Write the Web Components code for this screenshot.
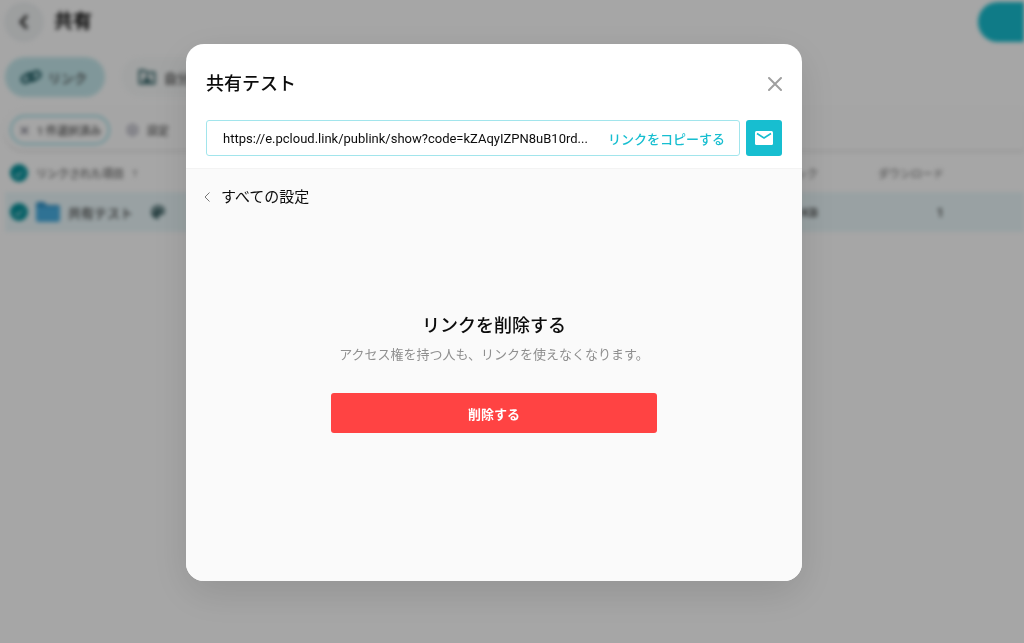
<!DOCTYPE html>
<html lang="ja">
<head>
<meta charset="utf-8">
<meta name="viewport" content="width=device-width, initial-scale=1">
<title>共有</title>
<style>
  :root {
    --accent: #17bed0;
    --accent-light: #a2e5ec;
    --danger: #ff4343;
    --text: #0c0c0c;
    --gray: #8f8f8f;
    --line: #f3f3f3;
  }

  body {
    margin: 0;
    min-height: 100vh;
    overflow: hidden;
    background: #fff;
    color: var(--text);
    font-family: Roboto, "Noto Sans CJK JP", sans-serif;
    font-size: 13px;
  }
</style>
</head>
<body>
<share-page inert>
  <page-header slot="header">共有</page-header>
  <tab-pill slot="tabs" icon="link" active>リンク</tab-pill>
  <tab-pill slot="tabs" icon="folder">自分</tab-pill>
  <selection-bar slot="toolbar">1 件選択済み</selection-bar>
  <links-table></links-table>
</share-page>

<modal-overlay>
  <share-modal>
    <span slot="title">共有テスト</span>
    <copy-link slot="link" url="https://e.pcloud.link/publink/show?code=kZAqyIZPN8uB10rd...">リンクをコピーする</copy-link>
    <delete-link>
      <span slot="heading">リンクを削除する</span>
      <span slot="text">アクセス権を持つ人も、リンクを使えなくなります。</span>
      <span slot="action">削除する</span>
    </delete-link>
  </share-modal>
</modal-overlay>

<script>
const BASE = `
  *, *::before, *::after {
    box-sizing: border-box;
  }

  button, input {
    font: inherit;
    color: inherit;
    margin: 0;
    padding: 0;
    border: none;
    background: none;
    outline: none;
  }

  button {
    cursor: pointer;
  }

  svg {
    display: block;
    flex: 0 0 auto;
  }
`;

const ICONS = {
  link: `
    <svg width="22" height="20" viewBox="0 0 22 20" fill="none" stroke="#1c5a60" stroke-width="2.500">
      <rect x="1.500" y="7.500" width="12" height="7" rx="3.500" transform="rotate(-30 7.500 11)"/>
      <rect x="8.500" y="5.500" width="12" height="7" rx="3.500" transform="rotate(-30 14.500 9)"/>
    </svg>`,
  folder: `
    <svg width="18" height="18" viewBox="0 0 18 18" fill="none" stroke="#2f6468" stroke-width="2">
      <path d="M1.5 2.5h5l2 2h8v11h-15z"/>
      <circle cx="9" cy="8" r="1.5" fill="#1f5358" stroke="none"/>
      <path d="M5 14c0-5 8-5 8 0z" fill="#1f5358" stroke="none"/>
    </svg>`
};

class SharePage extends HTMLElement {
  constructor() {
    super();

    this.attachShadow({ mode: 'open' });

    this.shadowRoot.innerHTML = `
      <style>
        ${BASE}

        :host {
          display: block;
          min-height: 100vh;
          filter: blur(2px);
        }

        .tabs {
          display: flex;
          gap: 16px;
          padding: 15px 5px 12px;
        }
      </style>

      <slot name="header"></slot>
      <nav class="tabs"><slot name="tabs"></slot></nav>
      <slot name="toolbar"></slot>
      <slot></slot>
    `;
  }
}

class PageHeader extends HTMLElement {
  constructor() {
    super();

    this.attachShadow({ mode: 'open' });

    this.shadowRoot.innerHTML = `
      <style>
        ${BASE}

        :host {
          display: flex;
          align-items: center;
          padding: 2px 0 0 4px;
        }

        .back {
          display: grid;
          place-items: center;
          width: 40px;
          height: 40px;
          border-radius: 50%;
          background: #f1f4f5;
        }

        h1 {
          flex: 1;
          margin: 0 0 0 10px;
          font-size: 19px;
          font-weight: 700;
          line-height: 40px;
        }

        .upload {
          width: 46px;
          height: 40px;
          border-radius: 20px 0 0 20px;
          background: var(--accent);
        }
      </style>

      <button class="back" aria-label="戻る">
        <svg width="12" height="16" viewBox="0 0 12 16" fill="none" stroke="#333" stroke-width="3"><path d="M9 1.500 3 8l6 6.500"/></svg>
      </button>
      <h1><slot></slot></h1>
      <button class="upload" aria-label="アップロード"></button>
    `;
  }
}

class TabPill extends HTMLElement {
  constructor() {
    super();

    this.attachShadow({ mode: 'open' });

    this.shadowRoot.innerHTML = `
      <style>
        ${BASE}

        :host {
          display: block;
        }

        button {
          display: flex;
          align-items: center;
          gap: 6px;
          min-width: 100px;
          height: 40px;
          padding: 0 15px;
          border-radius: 20px;
          background: #f9fbfb;
          color: #444;
          font-size: 13px;
          font-weight: 500;
        }

        .icon {
          display: grid;
          place-items: center;
          width: 22px;
        }

        :host([active]) button {
          background: #c5e9ed;
        }

        :host(:not([active])) button {
          min-width: 140px;
        }
      </style>

      <button>
        <span class="icon">${ICONS[this.getAttribute('icon')]}</span>
        <slot></slot>
      </button>
    `;
  }
}

class SelectionBar extends HTMLElement {
  constructor() {
    super();

    this.attachShadow({ mode: 'open' });

    this.shadowRoot.innerHTML = `
      <style>
        ${BASE}

        :host {
          display: flex;
          align-items: center;
          gap: 16px;
          height: 40px;
          margin-left: 4px;
          padding-left: 6px;
          border-top: 1px solid #f8f8f8;
          border-radius: 20px 0 0 20px;
          background: #fefefe;
          box-shadow: 0 2px 3px rgba(0, 0, 0, .1);
          color: #555;
          font-size: 11px;
          font-weight: 500;
        }

        button {
          display: flex;
          align-items: center;
          gap: 8px;
          height: 30px;
        }

        .selected {
          padding: 0 7px 0 8px;
          border: 2px solid #9de0e8;
          border-radius: 15px;
        }
      </style>

      <button class="selected">
        <svg width="9" height="9" viewBox="0 0 10 10" stroke="#667" stroke-width="1.500"><path d="M1 1l8 8M9 1L1 9"/></svg>
        <slot></slot>
      </button>
      <button>
        <svg width="13" height="14" viewBox="0 0 14 14" fill="none" stroke="#99a" stroke-width="1.500">
          <path d="M7 1l5.200 3v6L7 13l-5.200-3V4z"/>
          <circle cx="7" cy="7" r="2"/>
        </svg>
        設定
      </button>
    `;
  }
}

class LinksTable extends HTMLElement {
  constructor() {
    super();

    this.attachShadow({ mode: 'open' });

    this.shadowRoot.innerHTML = `
      <style>
        ${BASE}

        :host {
          display: block;
          padding: 0 0 0 5px;
        }

        table {
          width: 100%;
          border-collapse: collapse;
          table-layout: fixed;
        }

        th, td {
          height: 40px;
          padding: 0;
          text-align: right;
          white-space: nowrap;
        }

        th {
          height: 42px;
          padding-top: 4px;
          color: #888;
          font-size: 11px;
          font-weight: 500;
        }

        td {
          background: #ebf8fb;
          color: #444;
          font-size: 13px;
          font-weight: 500;
        }

        th.name {
          color: #666;
        }

        .traffic, .downloads {
          width: 126px;
        }

        .end {
          width: 80px;
        }

        .cell {
          display: flex;
          align-items: center;
          gap: 8px;
          padding-left: 5px;
        }

        input {
          appearance: none;
          display: grid;
          place-items: center;
          width: 18px;
          height: 18px;
          border-radius: 50%;
          background: #05929c;
        }

        input::after {
          content: '';
          width: 8px;
          height: 4px;
          border: solid #fff;
          border-width: 0 0 1px 1px;
          transform: rotate(-45deg);
        }

        .palette {
          margin-left: 10px;
        }
      </style>

      <table>
        <thead>
          <tr>
            <th class="name">
              <div class="cell">
                <input type="checkbox" aria-label="すべて選択" checked>
                リンクされた項目
                <svg width="6" height="8" viewBox="0 0 6 8" fill="none" stroke="#888"><path d="M3 8V1M1 3l2-2 2 2"/></svg>
              </div>
            </th>
            <th class="traffic">トラフィック</th>
            <th class="downloads">ダウンロード</th>
            <th class="end"></th>
          </tr>
        </thead>
        <tbody>
          <tr>
            <td>
              <div class="cell">
                <input type="checkbox" id="item" checked>
                <svg width="24" height="20" viewBox="0 0 24 20">
                  <path fill="#2f92c8" d="M0 2q0-2 2-2h6l3 3h11q2 0 2 2v5H0z"/>
                  <path fill="#49afe3" d="M0 6q0-1 1-1h22q1 0 1 1v12q0 2-2 2H2q-2 0-2-2z"/>
                </svg>
                <label for="item">共有テスト</label>
                <svg class="palette" width="14" height="14" viewBox="3 3 18 18"><path fill="#3f6467" d="M12 3a9 9 0 0 0 0 18c.83 0 1.500-.67 1.500-1.500 0-.39-.15-.74-.39-1.010-.23-.26-.38-.61-.38-.99 0-.83.67-1.500 1.500-1.500H16c2.760 0 5-2.240 5-5 0-4.420-4.030-8-9-8zm-5.500 9a1.500 1.500 0 1 1 0-3 1.500 1.500 0 0 1 0 3zm3-4a1.500 1.500 0 1 1 0-3 1.500 1.500 0 0 1 0 3zm5 0a1.500 1.500 0 1 1 0-3 1.500 1.500 0 0 1 0 3zm3 4a1.500 1.500 0 1 1 0-3 1.500 1.500 0 0 1 0 3z"/></svg>
              </div>
            </td>
            <td>0 KB</td>
            <td>1</td>
            <td></td>
          </tr>
        </tbody>
      </table>
    `;
  }
}

class ModalOverlay extends HTMLElement {
  constructor() {
    super();

    this.attachShadow({ mode: 'open' });

    this.shadowRoot.innerHTML = `
      <style>
        ${BASE}

        :host {
          box-sizing: border-box;
          position: fixed;
          inset: 0;
          display: flex;
          align-items: center;
          justify-content: center;
          padding: 0 36px 18px 0;
          background: rgba(0, 0, 0, .35);
        }
      </style>

      <slot></slot>
    `;
  }
}

class ShareModal extends HTMLElement {
  constructor() {
    super();

    this.attachShadow({ mode: 'open' });

    this.shadowRoot.innerHTML = `
      <style>
        ${BASE}

        :host {
          display: block;
          width: 100%;
          max-width: 616px;
          border-radius: 18px;
          overflow: hidden;
          background: #fff;
          box-shadow: 0 12px 40px rgba(0, 0, 0, .12);
        }

        header {
          padding: 24px 20px 12px;
        }

        .top {
          display: flex;
          align-items: center;
          justify-content: space-between;
          margin-bottom: 20px;
        }

        h2 {
          margin: 0;
          font-size: 18px;
          font-weight: 500;
          line-height: 32px;
        }

        .body {
          padding: 18px 17px 148px;
          border-top: 1px solid var(--line);
          background: #fafafa;
        }

        .back {
          display: flex;
          align-items: center;
          gap: 10px;
          font-size: 15px;
          line-height: 20px;
        }
      </style>

      <section role="dialog" aria-labelledby="title">
        <header>
          <div class="top">
            <h2 id="title"><slot name="title"></slot></h2>
            <button aria-label="閉じる">
              <svg width="14" height="14" viewBox="0 0 14 14" stroke="#a0a0a0" stroke-width="2" stroke-linecap="round"><path d="M1 1l12 12M13 1L1 13"/></svg>
            </button>
          </div>
          <slot name="link"></slot>
        </header>
        <div class="body">
          <button class="back">
            <svg width="8" height="12" viewBox="0 0 8 12" fill="none" stroke="#777" stroke-width="1"><path d="M6.500 1.500 2 6l4.500 4.500"/></svg>
            すべての設定
          </button>
          <slot></slot>
        </div>
      </section>
    `;
  }
}

class CopyLink extends HTMLElement {
  constructor() {
    super();

    this.attachShadow({ mode: 'open' });

    this.shadowRoot.innerHTML = `
      <style>
        ${BASE}

        :host {
          display: flex;
          gap: 6px;
        }

        .field {
          display: flex;
          flex: 1;
          align-items: center;
          gap: 15px;
          min-width: 0;
          height: 36px;
          padding: 0 14px 0 16px;
          border: 1px solid var(--accent-light);
          border-radius: 3px;
        }

        input {
          flex: 1;
          min-width: 0;
          font-size: 13px;
          text-overflow: ellipsis;
        }

        .copy {
          color: var(--accent);
          font-size: 13px;
          font-weight: 500;
          white-space: nowrap;
        }

        .mail {
          display: grid;
          place-items: center;
          width: 36px;
          height: 36px;
          border-radius: 3px;
          background: var(--accent);
        }
      </style>

      <div class="field">
        <input type="text" aria-label="リンク" value="${this.getAttribute('url')}" readonly>
        <button class="copy"><slot></slot></button>
      </div>
      <button class="mail" aria-label="メールで送信">
        <svg width="18" height="14" viewBox="0 0 18 14">
          <rect width="18" height="14" rx="1.500" fill="#fff"/>
          <path d="M2 2.500l7 4.500 7-4.500" fill="none" stroke="#17bed0" stroke-width="1.500"/>
        </svg>
      </button>
    `;
  }
}

class DeleteLink extends HTMLElement {
  constructor() {
    super();

    this.attachShadow({ mode: 'open' });

    this.shadowRoot.innerHTML = `
      <style>
        ${BASE}

        :host {
          display: flex;
          flex-direction: column;
          align-items: center;
          padding-top: 104px;
          text-align: center;
        }

        h3 {
          margin: 0 0 4px;
          font-size: 18px;
          font-weight: 500;
          line-height: 30px;
        }

        p {
          margin: 0 0 28px;
          color: var(--gray);
          font-size: 13px;
          line-height: 20px;
        }

        button {
          width: 100%;
          max-width: 326px;
          height: 40px;
          border-radius: 3px;
          background: var(--danger);
          color: #fff;
          font-size: 13px;
          font-weight: 700;
        }
      </style>

      <h3><slot name="heading"></slot></h3>
      <p><slot name="text"></slot></p>
      <button><slot name="action"></slot></button>
    `;
  }
}

customElements.define('share-page', SharePage);
customElements.define('page-header', PageHeader);
customElements.define('tab-pill', TabPill);
customElements.define('selection-bar', SelectionBar);
customElements.define('links-table', LinksTable);
customElements.define('modal-overlay', ModalOverlay);
customElements.define('share-modal', ShareModal);
customElements.define('copy-link', CopyLink);
customElements.define('delete-link', DeleteLink);
</script>
</body>
</html>
